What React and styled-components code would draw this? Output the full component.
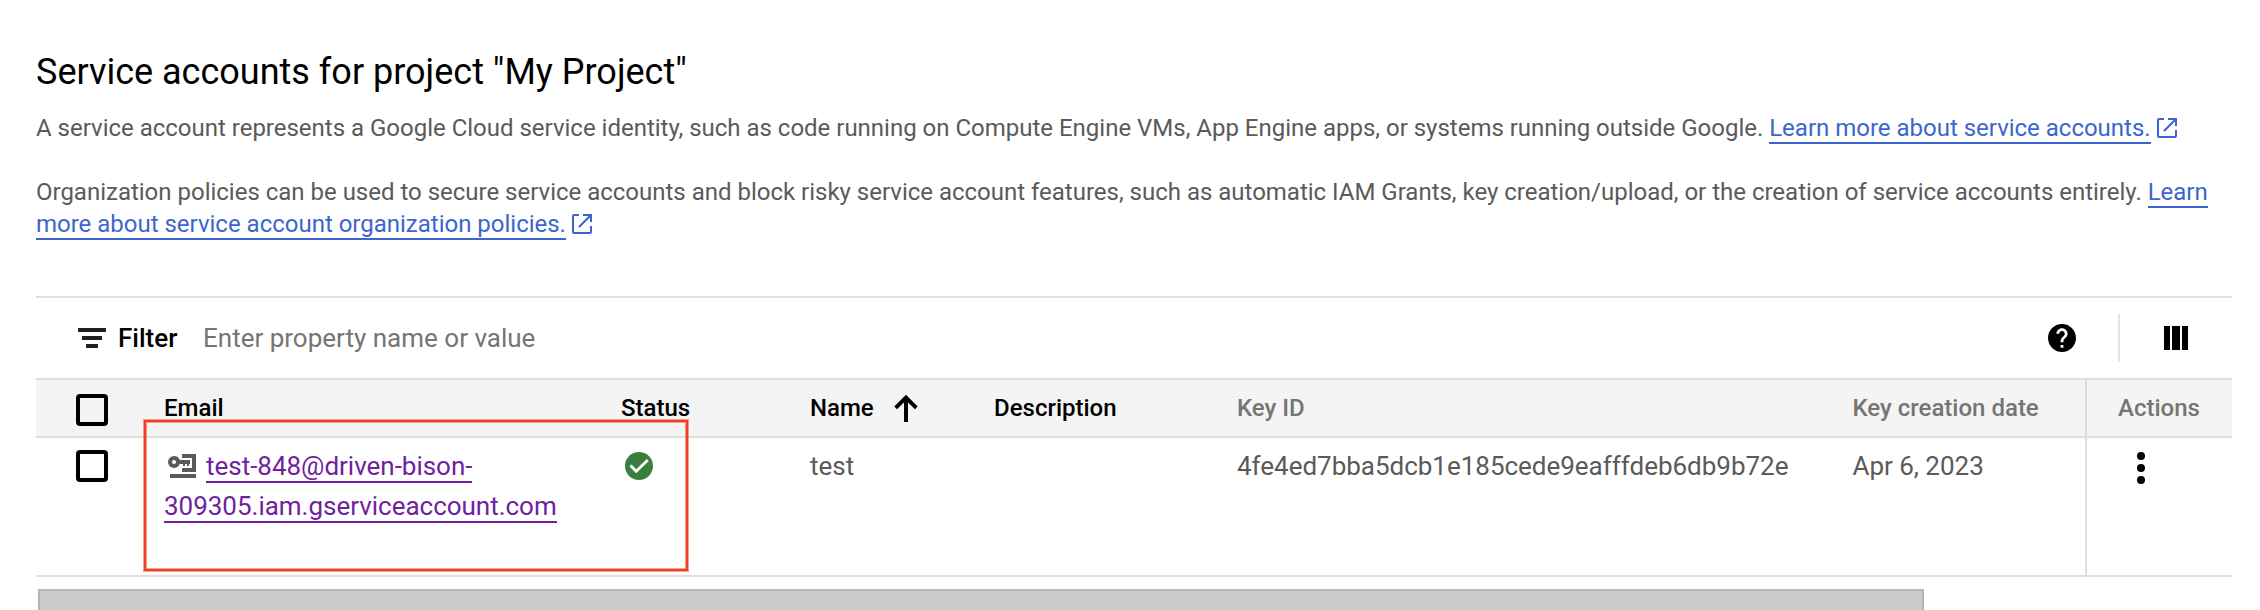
import React from "react";
import styled, { createGlobalStyle } from "styled-components";

const GlobalStyle = createGlobalStyle`
  * { box-sizing: border-box; }
  body { margin: 0; background: #fff; overflow: hidden; }
`;

const Page = styled.main`
  width: 2260px;
  height: 610px;
  overflow: hidden;
  padding: 0 28px 0 36px;
  background: #fff;
  font-family: Roboto, "Liberation Sans", sans-serif;
  color: #5a5a5a;
`;

const Title = styled.h1`
  margin: 0;
  padding-top: 50px;
  font-size: 36px;
  line-height: 44px;
  font-weight: 400;
  color: #000;
  white-space: nowrap;
`;

const Paragraph = styled.p`
  margin: 0;
  padding-top: ${({ $top }) => $top}px;
  font-size: 24px;
  line-height: 32px;
  letter-spacing: -0.008px;
  white-space: nowrap;
`;

const Link = styled.a`
  color: ${({ $visited }) => ($visited ? "#6f1fa0" : "#3c65d2")};
  text-decoration: none;
  border-bottom: 2px solid currentColor;
`;

const ExternalSvg = styled.svg`
  margin-left: 6px;
  vertical-align: -2px;
`;

const Panel = styled.section`
  margin-top: 56px;
  border-top: 2px solid #dfdfdf;
`;

const FilterBar = styled.div`
  display: flex;
  align-items: center;
  height: 80px;
  padding: 0 44px 0 42px;
  font-size: 26px;
`;

const FilterLabel = styled.span`
  margin-left: 12px;
  width: 85px;
  font-weight: 500;
  color: #000;
`;

const Placeholder = styled.span`
  flex: 1;
  color: #757575;
`;

const Divider = styled.span`
  width: 2px;
  height: 48px;
  margin: 0 44px 0 42px;
  background: #e5e5e5;
`;

const Row = styled.div`
  display: grid;
  grid-template-columns: 128px 457px 189px 184px 243px 615.5px 232.5px 147px;
  height: ${({ $head }) => ($head ? 60 : 139)}px;
  border-top: ${({ $head }) => ($head ? "2px solid #dfdfdf" : "none")};
  border-bottom: 2px solid #dfdfdf;
  background: ${({ $head }) => ($head ? "#f4f4f4" : "#fff")};
`;

const HeadCell = styled.div`
  padding-top: 12px;
  font-size: 24px;
  line-height: 32px;
  font-weight: 500;
  color: ${({ $muted }) => ($muted ? "#757575" : "#000")};
  white-space: nowrap;
  border-left: ${({ $action }) => ($action ? "2px solid #dcdcdc" : "none")};
  padding-left: ${({ $action }) => ($action ? 31 : 0)}px;
`;

const Cell = styled.div`
  padding-top: 8px;
  font-size: 26px;
  line-height: 40px;
  letter-spacing: -0.02px;
  white-space: nowrap;
  border-left: ${({ $action }) => ($action ? "2px solid #dfdfdf" : "none")};
  padding-left: ${({ $action }) => ($action ? 50 : 0)}px;
`;

const CheckCell = styled.div`
  padding: ${({ $top }) => $top}px 0 0 40px;
`;

const Checkbox = styled.span`
  display: block;
  width: 32px;
  height: 32px;
  border: 4px solid #000;
  border-radius: 4px;
`;

const EmailCell = styled(Cell)`
  position: relative;
`;

const Highlight = styled.span`
  position: absolute;
  left: -20px;
  top: -18px;
  width: 543.5px;
  height: 151px;
  border: 2px solid #f04023;
  box-shadow: 0 0 0 1px rgba(240, 64, 35, 0.5), inset 0 0 0 1px rgba(240, 64, 35, 0.5);
  pointer-events: none;
`;

const KeySvg = styled.svg`
  margin: 0 10px 0 4px;
  vertical-align: -3px;
`;

const StatusSvg = styled.svg`
  display: block;
  margin: 6px 0 0 4px;
`;

const SortSvg = styled.svg`
  margin-left: 19px;
  vertical-align: -6px;
`;

const DotsSvg = styled.svg`
  display: block;
  margin-top: 6px;
`;

const Scrollbar = styled.div`
  width: 1886px;
  height: 32px;
  margin: 12px 0 0 2px;
  border: 2px solid #b5b5b5;
  background: #cbcbcb;
`;

const ExternalIcon = () => (
  <ExternalSvg width="20" height="20" viewBox="0 0 20 20" fill="none" stroke="#3c65d2" strokeWidth="2">
    <path d="M7 1H2a1 1 0 0 0-1 1v16a1 1 0 0 0 1 1h16a1 1 0 0 0 1-1v-6M11 1h8v7M19 1 7 13" />
  </ExternalSvg>
);

const FilterIcon = () => (
  <svg width="28" height="20" viewBox="0 0 28 20" fill="#202020">
    <path d="M0 0h28v4H0zM4 8h20v4H4zM8 16h12v4H8z" />
  </svg>
);

const HelpIcon = () => (
  <svg width="28" height="28" viewBox="2 2 20 20">
    <path d="M12 2C6.48 2 2 6.48 2 12s4.48 10 10 10 10-4.48 10-10S17.520 2 12 2zm1 17h-2v-2h2v2zm2.070-7.750l-.9.920C13.450 12.900 13 13.500 13 15h-2v-.5c0-1.100.450-2.100 1.170-2.830l1.240-1.260c.370-.360.590-.860.590-1.410 0-1.100-.9-2-2-2s-2 .9-2 2H8c0-2.210 1.790-4 4-4s4 1.790 4 4c0 .880-.360 1.680-.930 2.250z" />
  </svg>
);

const ColumnsIcon = () => (
  <svg width="24" height="24" viewBox="0 0 24 24">
    <path d="M0 0h6v24H0zM8 0h8v24H8zM18 0h6v24h-6z" />
  </svg>
);

const SortIcon = () => (
  <SortSvg width="26" height="28" viewBox="0 0 26 28" fill="none" stroke="#000" strokeWidth="4">
    <path d="M13 28V4M2.700 13.800 13 3.500l10.300 10.300" />
  </SortSvg>
);

const KeyIcon = () => (
  <KeySvg width="28" height="24" viewBox="0 0 28 24" fill="#5a5a5a">
    <path d="M14 0h14v18H14v-4h10V4H14zM2 20h26v4H2z" />
    <path fillRule="evenodd" d="M6 2a6 6 0 0 1 5.700 4H22v4h-1v2h-2v-2h-2v2h-2v-2h-3.300A6 6 0 1 1 6 2zm0 4a2 2 0 1 0 0 4 2 2 0 0 0 0-4z" />
  </KeySvg>
);

const StatusIcon = () => (
  <StatusSvg width="28" height="28" viewBox="0 0 28 28">
    <circle cx="14" cy="14" r="14" fill="#3a7f3e" />
    <path d="m5.500 13.500 5.700 5.700L22.800 8" fill="none" stroke="#fff" strokeWidth="2.8" />
  </StatusSvg>
);

const DotsIcon = () => (
  <DotsSvg width="8" height="32" viewBox="0 0 8 32">
    <circle cx="4" cy="4" r="4" />
    <circle cx="4" cy="16" r="4" />
    <circle cx="4" cy="28" r="4" />
  </DotsSvg>
);

export default function App() {
  return (
    <>
      <GlobalStyle />
      <Page>
        <Title>Service accounts for project "My Project"</Title>
        <Paragraph $top={18}>
          A service account represents a Google Cloud service identity, such as code running on Compute Engine VMs, App
          Engine apps, or systems running outside Google. <Link>Learn more about service accounts.</Link>
          <ExternalIcon />
        </Paragraph>
        <Paragraph $top={32}>
          Organization policies can be used to secure service accounts and block risky service account features, such as
          automatic IAM Grants, key creation/upload, or the creation of service accounts entirely.{" "}
          <Link>
            Learn
            <br />
            more about service account organization policies.
          </Link>
          <ExternalIcon />
        </Paragraph>
        <Panel>
          <FilterBar>
            <FilterIcon />
            <FilterLabel>Filter</FilterLabel>
            <Placeholder>Enter property name or value</Placeholder>
            <HelpIcon />
            <Divider />
            <ColumnsIcon />
          </FilterBar>
          <Row $head>
            <CheckCell $top={14}>
              <Checkbox />
            </CheckCell>
            <HeadCell>Email</HeadCell>
            <HeadCell>Status</HeadCell>
            <HeadCell>
              Name
              <SortIcon />
            </HeadCell>
            <HeadCell>Description</HeadCell>
            <HeadCell $muted>Key ID</HeadCell>
            <HeadCell $muted>Key creation date</HeadCell>
            <HeadCell $muted $action>
              Actions
            </HeadCell>
          </Row>
          <Row>
            <CheckCell $top={12}>
              <Checkbox />
            </CheckCell>
            <EmailCell>
              <KeyIcon />
              <Link $visited>
                test-848@driven-bison-
                <br />
                309305.iam.gserviceaccount.com
              </Link>
              <Highlight />
            </EmailCell>
            <Cell>
              <StatusIcon />
            </Cell>
            <Cell>test</Cell>
            <Cell />
            <Cell>4fe4ed7bba5dcb1e185cede9eafffdeb6db9b72e</Cell>
            <Cell>Apr 6, 2023</Cell>
            <Cell $action>
              <DotsIcon />
            </Cell>
          </Row>
        </Panel>
        <Scrollbar />
      </Page>
    </>
  );
}
